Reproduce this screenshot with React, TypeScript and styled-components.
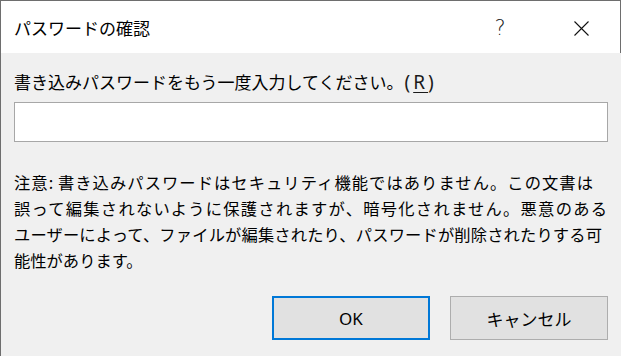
import React from "react";
import styled, { createGlobalStyle } from "styled-components";

const GlobalStyle = createGlobalStyle`
  html, body {
    margin: 0;
    padding: 0;
    background: #f0f0f0;
  }
  * { box-sizing: border-box; }
`;

const jp = `"Noto Sans CJK JP", "Noto Sans", sans-serif`;
const latin = `"Noto Sans", "Noto Sans CJK JP", sans-serif`;

const Window = styled.div`
  width: 621px;
  height: 356px;
  background: #f0f0f0;
  border-left: 1px solid #6e6e6e;
  border-top: 1px solid #6e6e6e;
  display: flex;
  flex-direction: column;
  font-family: ${jp};
  color: #000;
  overflow: hidden;
`;

const TitleBar = styled.div`
  height: 52px;
  background: #fff;
  border-right: 1px solid #6e6e6e;
  display: flex;
  align-items: center;
  padding: 2px 16px 0 13px;
`;

const Title = styled.div`
  flex: 1;
  font-size: 17px;
  line-height: 24px;
`;

const CaptionButton = styled.div<{ $gap?: number }>`
  width: 46px;
  height: 30px;
  margin-right: ${(p) => p.$gap ?? 0}px;
  display: flex;
  align-items: center;
  justify-content: center;
  font-family: "DejaVu Sans", sans-serif;
  font-weight: 200;
  font-size: 21px;
  color: #222;
`;

const Body = styled.div`
  flex: 1;
  display: flex;
  flex-direction: column;
  padding: 17px 13px 0 13px;
`;

const Label = styled.div`
  font-size: 17px;
  line-height: 24px;
  white-space: nowrap;
`;

const Accel = styled.span`
  font-family: ${latin};
  font-size: 19px;
  letter-spacing: 3px;
  margin-left: 1px;
  color: #1a1a1a;
  u { text-underline-offset: 3px; }
`;

const PasswordInput = styled.input`
  margin-top: 8px;
  width: 594px;
  height: 40px;
  border: 1px solid #a7a7a7;
  background: #fff;
  outline: none;
  padding: 0 6px;
  font-size: 16px;
`;

const Notice = styled.div`
  margin-top: 27px;
  font-size: 16.3px;
  line-height: 26px;
`;

const NoticeLine = styled.div<{ $width?: number }>`
  width: ${(p) => (p.$width ? `${p.$width}px` : "auto")};
  white-space: nowrap;
  text-align: ${(p) => (p.$width ? "justify" : "left")};
  text-align-last: ${(p) => (p.$width ? "justify" : "left")};
  text-justify: inter-character;
`;

const ButtonRow = styled.div`
  margin-top: 23px;
  display: flex;
  justify-content: flex-end;
  gap: 20px;
`;

const Button = styled.button<{ $default?: boolean }>`
  width: 158px;
  height: 44px;
  background: #e1e1e1;
  border: ${(p) => (p.$default ? "2px solid #0078d7" : "1px solid #adadad")};
  font-family: ${(p) => (p.$default ? latin : jp)};
  font-size: 17px;
  color: #000;
  padding: 0;
  margin: 0;
`;

export default function App() {
  return (
    <>
      <GlobalStyle />
      <Window>
        <TitleBar>
          <Title>パスワードの確認</Title>
          <CaptionButton $gap={35}>?</CaptionButton>
          <CaptionButton>
            <svg width="15" height="15" viewBox="0 0 15 15">
              <path d="M0.5 0.5 L14.5 14.5 M14.5 0.5 L0.5 14.5" stroke="#111" strokeWidth="1.1" fill="none" />
            </svg>
          </CaptionButton>
        </TitleBar>
        <Body>
          <Label>
            書き込みパスワードをもう一度入力してください。
            <Accel>
              (<u>R</u>)
            </Accel>
          </Label>
          <PasswordInput type="password" />
          <Notice>
            <NoticeLine $width={579}>注意: 書き込みパスワードはセキュリティ機能ではありません。この文書は</NoticeLine>
            <NoticeLine $width={593}>誤って編集されないように保護されますが、暗号化されません。悪意のある</NoticeLine>
            <NoticeLine $width={588}>ユーザーによって、ファイルが編集されたり、パスワードが削除されたりする可</NoticeLine>
            <NoticeLine>能性があります。</NoticeLine>
          </Notice>
          <ButtonRow>
            <Button $default>OK</Button>
            <Button>キャンセル</Button>
          </ButtonRow>
        </Body>
      </Window>
    </>
  );
}
